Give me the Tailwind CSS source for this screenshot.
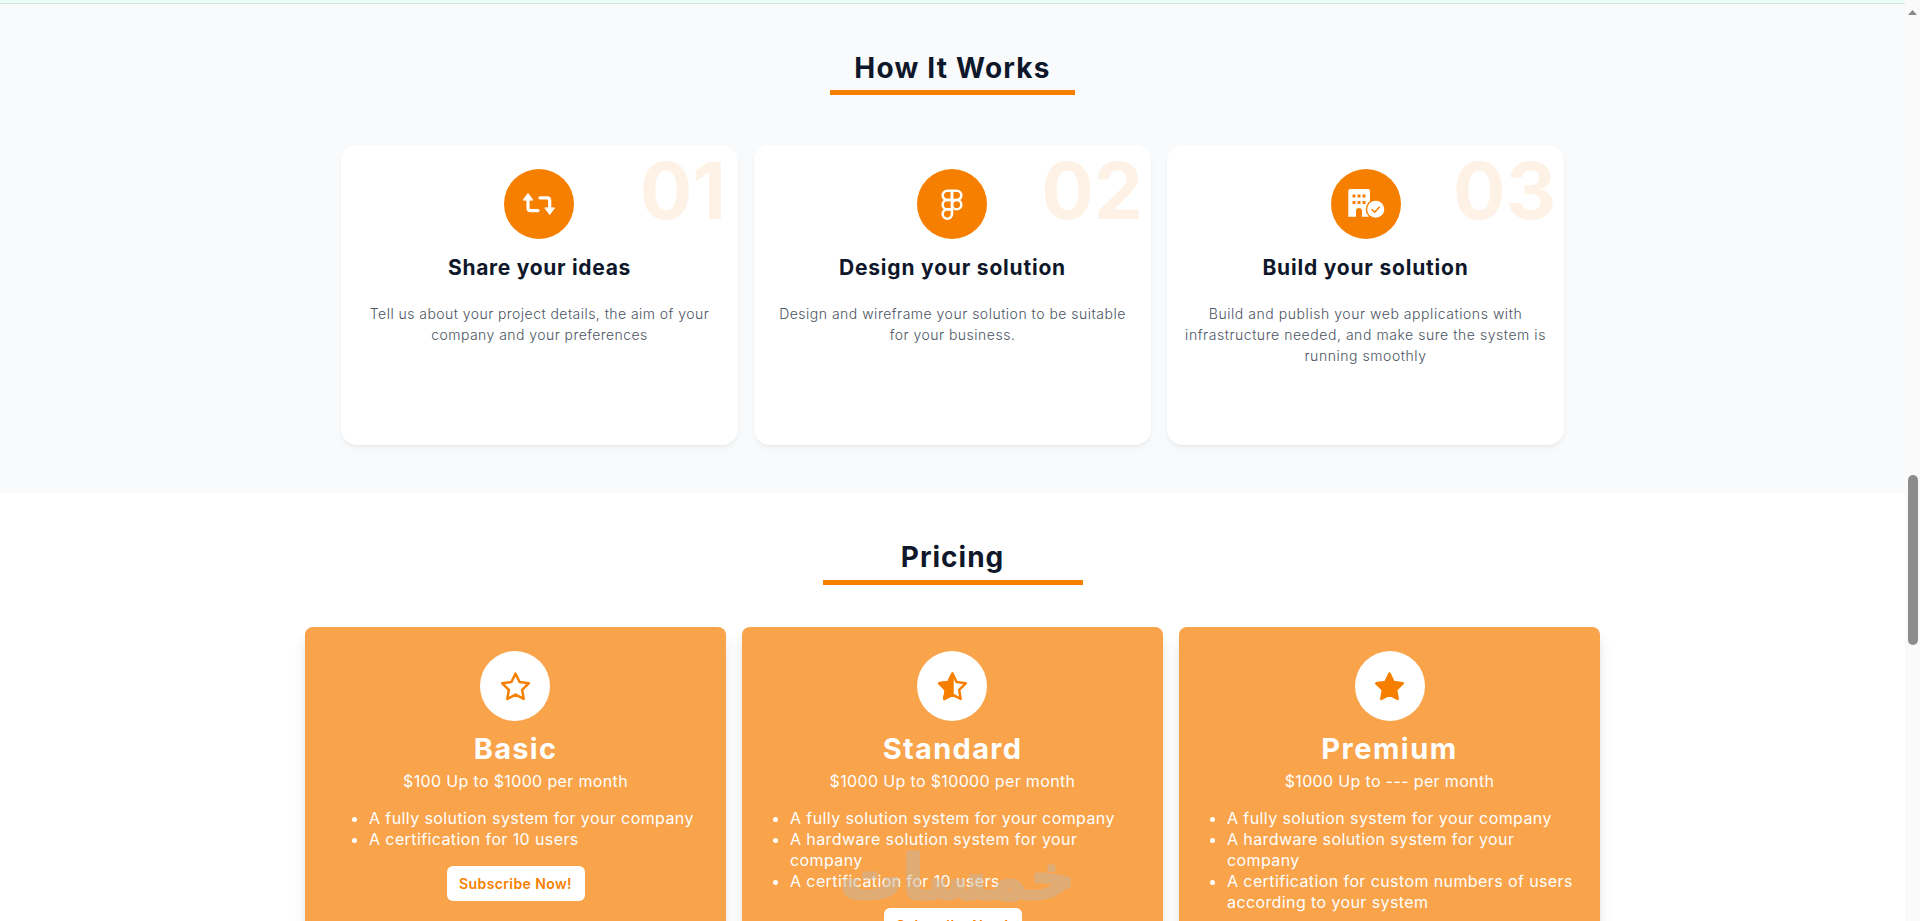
<!DOCTYPE html>
<html lang="en">
<head>
  <meta charset="UTF-8" />
  <meta name="viewport" content="width=device-width, initial-scale=1.0"/>
  <title>How It Works</title>
  <script src="https://cdn.jsdelivr.net/npm/@tailwindcss/browser@4"></script>
</head>
<body class="h-screen overflow-hidden flex bg-white font-['Inter','Noto_Sans',sans-serif] text-[#0f172a]">

  <main class="flex-1 min-w-0">
    <!-- strip of the section above -->
    <div class="h-[4px] bg-[#ecfdf5] border-b border-[#d5e5e2]"></div>

    <!-- How it works -->
    <section class="bg-[#f9fafb] h-[489px] pt-[49px]">
      <div class="flex justify-center">
        <h2 class="w-[245px] h-[42px] text-center text-[28px] leading-[30px] font-bold tracking-[1.2px] border-b-[5px] border-[#f77f00]">How It Works</h2>
      </div>
      <div class="mt-[50px] w-[1223px] mx-auto grid grid-cols-3 gap-4">

        <div class="relative h-[300px] bg-white rounded-2xl shadow-md shadow-black/5 p-6 text-center">
          <span class="absolute right-3 top-[-2px] text-[78px] leading-[96px] font-bold text-[#fef2e6]">01</span>
          <div class="relative ml-[calc(50%-35.5px)] w-[70px] h-[70px] rounded-full bg-[#f77f00] flex items-center justify-center">
            <svg width="32" height="32" viewBox="0 0 32 32" fill="none" stroke="white" stroke-width="3.2" stroke-linecap="round">
              <path d="M5 11v9q0 2.6 2.6 2.6H15"/>
              <path d="M17 9.8h7q2.7 0 2.7 2.7V21"/>
              <path d="M0.3 11.8 5 5.5l4.7 6.3z" fill="white" stroke-width="1" stroke-linejoin="round"/>
              <path d="M22 20.2l4.7 6.3 4.7-6.3z" fill="white" stroke-width="1" stroke-linejoin="round"/>
            </svg>
          </div>
          <h3 class="mt-[17px] text-[21px] leading-[24px] font-bold tracking-[0.7px]">Share your ideas</h3>
          <p class="mt-[23px] text-sm leading-[21px] font-light text-[#4b5563] tracking-[0.45px]">Tell us about your project details, the aim of your<br>company and your preferences</p>
        </div>

        <div class="relative h-[300px] bg-white rounded-2xl shadow-md shadow-black/5 p-6 text-center">
          <span class="absolute right-2 top-[-2px] text-[78px] leading-[96px] font-bold text-[#fef2e6]">02</span>
          <div class="relative ml-[calc(50%-35.5px)] w-[70px] h-[70px] rounded-full bg-[#f77f00] flex items-center justify-center">
            <svg width="32" height="32" viewBox="0 0 24 24" fill="none" stroke="white" stroke-width="1.9" stroke-linecap="round" stroke-linejoin="round">
              <path d="M5 5.5A3.5 3.5 0 0 1 8.5 2H12v7H8.5A3.5 3.5 0 0 1 5 5.5z"/>
              <path d="M12 2h3.5a3.5 3.5 0 1 1 0 7H12V2z"/>
              <path d="M12 12.5a3.5 3.5 0 1 1 7 0 3.5 3.5 0 1 1-7 0z"/>
              <path d="M5 19.5A3.5 3.5 0 0 1 8.5 16H12v3.5a3.5 3.5 0 1 1-7 0z"/>
              <path d="M5 12.5A3.5 3.5 0 0 1 8.5 9H12v7H8.5A3.5 3.5 0 0 1 5 12.5z"/>
            </svg>
          </div>
          <h3 class="mt-[17px] text-[21px] leading-[24px] font-bold tracking-[0.8px]">Design your solution</h3>
          <p class="mt-[23px] text-sm leading-[21px] font-light text-[#4b5563] tracking-[0.5px]">Design and wireframe your solution to be suitable<br>for your business.</p>
        </div>

        <div class="relative h-[300px] bg-white rounded-2xl shadow-md shadow-black/5 p-6 text-center">
          <span class="absolute right-2 top-[-2px] text-[78px] leading-[96px] font-bold text-[#fef2e6]">03</span>
          <div class="relative mx-auto w-[70px] h-[70px] rounded-full bg-[#f77f00] flex items-center justify-center">
            <svg width="40" height="40" viewBox="0 0 40 40">
              <path d="M4 5h18a2 2 0 0 1 2 2v25.7H16V27a3 3 0 0 0-6 0v5.7H2.3V7A2 2 0 0 1 4 5z" fill="white"/>
              <g fill="#f77f00">
                <rect x="6.5" y="10.5" width="3" height="3"/><rect x="11.5" y="10.5" width="3" height="3"/><rect x="16.5" y="10.5" width="3" height="3"/>
                <rect x="6.5" y="17" width="3" height="3"/><rect x="11.5" y="17" width="3" height="3"/><rect x="16.5" y="17" width="3" height="3"/>
              </g>
              <circle cx="29.7" cy="25.3" r="10" fill="#f77f00"/>
              <circle cx="29.7" cy="25.3" r="8.5" fill="white"/>
              <path d="M26 25.5l2.7 2.7 4.6-5" fill="none" stroke="#f77f00" stroke-width="1.6" stroke-linecap="round" stroke-linejoin="round"/>
            </svg>
          </div>
          <h3 class="mt-[17px] text-[21px] leading-[24px] font-bold tracking-[0.8px]">Build your solution</h3>
          <p class="mt-[23px] -mx-4 text-sm leading-[21px] font-light text-[#4b5563] tracking-[0.55px]">Build and publish your web applications with<br>infrastructure needed, and make sure the system is<br>running smoothly</p>
        </div>
      </div>
    </section>

    <!-- Pricing -->
    <section class="pt-[46px]">
      <div class="flex justify-center">
        <h2 class="w-[260px] h-[46px] text-center text-[28px] leading-[36px] font-bold tracking-[1px] border-b-[5px] border-[#f77f00]">Pricing</h2>
      </div>
      <div class="mt-[42px] w-[1295px] mx-auto grid grid-cols-3 gap-4 text-white">

        <div class="rounded-lg bg-[#f9a34b] shadow-lg shadow-black/15 p-6 h-[400px]">
          <div class="ml-[calc(50%-35.5px)] w-[70px] h-[70px] rounded-full bg-white flex items-center justify-center">
            <svg width="35" height="35" viewBox="0 0 24 24" fill="none" stroke="#f77f00" stroke-width="1.7" stroke-linejoin="round"><path d="M12 3.2l2.8 5.7 6.3.9-4.55 4.45 1.07 6.25L12 17.55l-5.62 2.95 1.07-6.25L2.9 9.8l6.3-.9z"/></svg>
          </div>
          <h3 class="mt-[9px] text-center text-[29px] leading-[38px] font-bold tracking-[1.3px]">Basic</h3>
          <p class="mt-[3px] text-center text-base leading-[21px] tracking-[0.35px]">$100 Up to $1000 per month</p>
          <ul class="mt-[16px] pl-10 list-disc text-base leading-[21px] tracking-[0.4px]">
            <li>A fully solution system for your company</li>
            <li>A certification for 10 users</li>
          </ul>
          <button class="block mx-auto mt-[16px] w-[138px] h-[35px] rounded-md bg-white text-[#f77f00] text-sm font-semibold tracking-[0.4px]">Subscribe Now!</button>
        </div>

        <div class="rounded-lg bg-[#f9a34b] shadow-lg shadow-black/15 p-6 h-[400px]">
          <div class="ml-[calc(50%-35.5px)] w-[70px] h-[70px] rounded-full bg-white flex items-center justify-center">
            <svg width="35" height="35" viewBox="0 0 24 24" fill="none" stroke="#f77f00" stroke-width="1.7" stroke-linejoin="round"><path d="M12 3.2l2.8 5.7 6.3.9-4.55 4.45 1.07 6.25L12 17.55l-5.62 2.95 1.07-6.25L2.9 9.8l6.3-.9z"/><path d="M12 3.2v14.35l-5.62 2.95 1.07-6.25L2.9 9.8l6.3-.9z" fill="#f77f00"/></svg>
          </div>
          <h3 class="mt-[9px] text-center text-[29px] leading-[38px] font-bold tracking-[1.3px]">Standard</h3>
          <p class="mt-[3px] text-center text-base leading-[21px] tracking-[0.35px]">$1000 Up to $10000 per month</p>
          <ul class="mt-[16px] pl-6 list-disc text-base leading-[21px] tracking-[0.4px]">
            <li>A fully solution system for your company</li>
            <li>A hardware solution system for your<br>company</li>
            <li>A certification for 10 users</li>
          </ul>
          <button class="block mx-auto mt-[16px] w-[138px] h-[35px] rounded-md bg-white text-[#f77f00] text-sm font-semibold tracking-[0.4px]">Subscribe Now!</button>
        </div>

        <div class="rounded-lg bg-[#f9a34b] shadow-lg shadow-black/15 p-6 h-[400px]">
          <div class="mx-auto w-[70px] h-[70px] rounded-full bg-white flex items-center justify-center">
            <svg width="35" height="35" viewBox="0 0 24 24" fill="#f77f00" stroke="#f77f00" stroke-width="1.7" stroke-linejoin="round"><path d="M12 3.2l2.8 5.7 6.3.9-4.55 4.45 1.07 6.25L12 17.55l-5.62 2.95 1.07-6.25L2.9 9.8l6.3-.9z"/></svg>
          </div>
          <h3 class="mt-[9px] text-center text-[29px] leading-[38px] font-bold tracking-[1.5px]">Premium</h3>
          <p class="mt-[3px] text-center text-base leading-[21px] tracking-[0.35px]">$1000 Up to --- per month</p>
          <ul class="mt-[16px] pl-6 list-disc text-base leading-[21px] tracking-[0.4px]">
            <li>A fully solution system for your company</li>
            <li>A hardware solution system for your<br>company</li>
            <li>A certification for custom numbers of users<br>according to your system</li>
          </ul>
          <button class="block mx-auto mt-[16px] w-[138px] h-[35px] rounded-md bg-white text-[#f77f00] text-sm font-semibold tracking-[0.4px]">Subscribe Now!</button>
        </div>
      </div>
    </section>
  </main>

  <!-- watermark over the page -->
  <div dir="rtl" lang="ar" class="fixed left-[845px] top-[838px] w-[230px] text-center whitespace-nowrap pointer-events-none text-[62px] leading-[80px] font-bold font-['DejaVu_Sans',sans-serif] text-[#c7b59f] opacity-50 [-webkit-text-stroke:3px_#c7b59f]">خمسات</div>

  <!-- scrollbar -->
  <aside class="w-[15px] shrink-0 bg-[#fafafa] flex flex-col items-center">
    <svg class="mt-[10px]" width="9" height="5" viewBox="0 0 9 5"><path d="M4.5 0 9 5H0z" fill="#8a8a8a"/></svg>
    <div class="mt-[460px] w-[10px] h-[170px] rounded-full bg-[#8c8c8c]"></div>
  </aside>

</body>
</html>
